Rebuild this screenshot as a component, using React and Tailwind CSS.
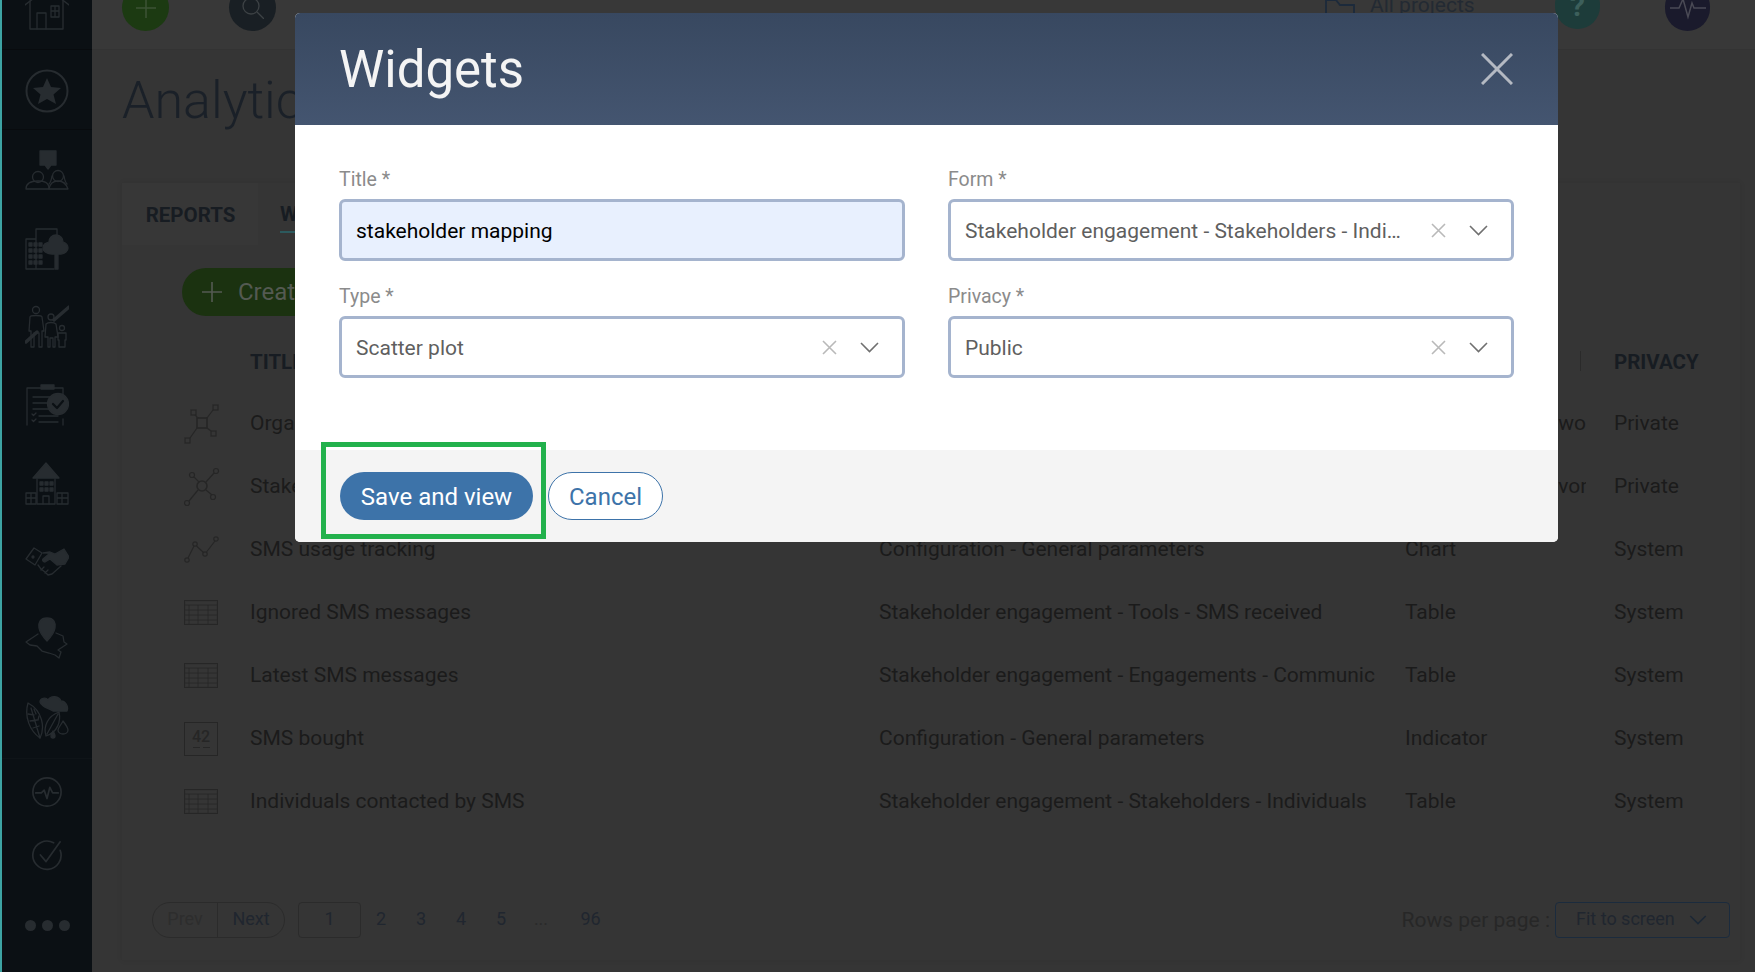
import React from "react";

const S = "#272c30";

function Ic({ children, w = 44, h = 44, vb = "0 0 44 44", color = S, sw = 1.3 }) {
  return (
    <svg width={w} height={h} viewBox={vb} fill="none" stroke={color} strokeWidth={sw} strokeLinecap="round" strokeLinejoin="round">
      {children}
    </svg>
  );
}

const sideIcons = [
  <Ic key="people">
    <path d="M15 2h16v14h-5l-3 4-3-4h-5z" fill={S} />
    <circle cx="13" cy="28" r="5.5" />
    <path d="M1 40c0-7 6-8 12-8s11 1 11 8z" />
    <circle cx="33" cy="27" r="5.5" />
    <path d="M27 27c-1 6-3 8-3 8M39 27c1 6 3 8 3 8" />
    <path d="M24 40c1-6 5-8 9-8s8 2 10 8z" />
  </Ic>,
  <Ic key="city">
    <path d="M1 42V12h10V2h21v12M11 12v30M1 42h28" />
    <path fill={S} d="M4 16h3v3H4zM9 16h3v3H9zM14 16h3v3h-3zM4 22h3v3H4zM9 22h3v3H9zM14 22h3v3h-3zM4 28h3v3H4zM9 28h3v3H9zM14 28h3v3h-3zM4 34h3v3H4zM9 34h3v3H9zM14 34h3v3h-3z" />
    <path fill={S} d="M31 8c5 0 7 4 7 7 3 1 5 3 5 6s-3 6-7 6h-3v15h-3V27h-3c-4 0-9-2-9-6s3-5 6-6c0-4 3-7 7-7z" />
  </Ic>,
  <Ic key="family">
    <circle cx="11" cy="5" r="3.500" />
    <path d="M5 12c0-2 12-2 12 0l2 14h-2v16h-3V28h-5v14H6V26H4z" />
    <circle cx="26" cy="12" r="3" />
    <path d="M21 19c2-2 8-2 10 0l2 13h-3v10h-2v-9h-3v9h-2v-10h-3z" />
    <circle cx="37" cy="23" r="2.500" />
    <path d="M33 28h8v7h-1v7h-6v-7h-1z" />
    <path d="M1 37 12 27M29 15 44 2" strokeWidth="3.400" />
  </Ic>,
  <Ic key="clip">
    <path d="M2 42V5h36v8M38 36v6" />
    <path d="M16 2h13v4H16z" fill={S} />
    <path d="M8 14h23M8 20h19M8 26h16M14 33h19M14 39h19" />
    <path d="M7 31l1.500 1.500L11 30M7 37l1.500 1.500L11 36" />
    <circle cx="33" cy="21" r="10.500" fill={S} />
    <path d="M28 21l4 4 6-7" stroke="#0b1014" strokeWidth="2.200" />
  </Ic>,
  <Ic key="house">
    <path d="M8 17 21 2l13 15z" fill={S} />
    <path d="M12 18v25h18V18" />
    <path fill={S} d="M15 21h3v3h-3zM20 21h3v3h-3zM25 21h3v3h-3zM15 27h3v3h-3zM20 27h3v3h-3zM25 27h3v3h-3z" />
    <path d="M1 32h10v11H1zM32 32h11v11H32zM1 37h10M6 32v11M32 37h11M37 32v11M18 43v-8h6v8" />
  </Ic>,
  <Ic key="hand">
    <path d="M9 9 1 20l9 6 7-12z" />
    <circle cx="8" cy="18" r="1" fill={S} />
    <path d="M18 14l7-1 5 2 9-5 5 8-4 7-8 1-7-6-5 3c-2 0-3-2-2-3l6-5" fill={S} />
    <path d="M13 26l3 4 4 3 3 3 4-1 9-8M16 31l3-3M20 34l3-3" />
  </Ic>,
  <Ic key="pin">
    <path d="M22 1c7 0 9 5 8 10-1 6-8 13-8 13s-7-7-8-13c-1-5 1-10 8-10z" fill={S} />
    <path d="M13 17 1 25l4 3 7 1 5 5 7 2 6 2 4 3 2-6-3-2 9-6-3-2-1-6-7-3" />
  </Ic>,
  <Ic key="leaf">
    <path d="M3 8C-1 22 5 36 15 43c5-10 3-27-12-35z" />
    <path d="M6 13l9 30M3 19l6 1M5 26l7-1M8 33l6-2M9 14l2 5M14 21l-1 4" />
    <path d="M15 7c0-4 6-5 8-2 3-5 11-4 13 1 4 0 8 5 6 10H28c-4-3-11-3-13-9z" fill={S} />
    <path d="M21 41c-3-10 2-20 13-24 2 9-1 20-13 24zM22 39l11-20" />
    <path d="M38 26c3 4 5 7 5 9s-2 4-5 4-5-2-5-4 3-5 5-9z" />
    <path d="M28 36c1 2 2 3 2 5s-1 2-2 2-2-1-2-2 1-3 2-5z" fill={S} />
  </Ic>,
];

function Sidebar() {
  return (
    <aside className="w-[92px] h-full shrink-0 flex flex-col border-l-2 border-[#3da3a3] bg-[#0b1014]">
      <div className="h-[50px] shrink-0 overflow-hidden flex items-end justify-center pb-[19px] border-b border-[#080b0e]">
        <div className="shrink-0">
          <Ic>
            <path d="M0 19 22 2l22 17" strokeWidth="1.400" />
            <path d="M5 15v28h33V15" strokeWidth="1.400" />
            <path d="M12 43V27h9v16M26 20h8v11h-8zM30 20v11M26 25h8" />
          </Ic>
        </div>
      </div>
      <div className="h-[80px] shrink-0 pt-[2px] flex items-center justify-center border-b border-[#080b0e]">
        <svg width="44" height="44" viewBox="0 0 44 44" fill="none">
          <circle cx="22" cy="22" r="20.500" stroke={S} strokeWidth="2" />
          <path d="M22 9l4 9 10 1-7.500 6.500L31 35l-9-5-9 5 2.500-9.500L8 19l10-1z" fill={S} />
        </svg>
      </div>
      <div className="pt-[2px] pb-[2px] shrink-0 border-b border-[#0f1418]">
        {sideIcons.map((icon, i) => (
          <div key={i} className="h-[78px] flex items-center justify-center">{icon}</div>
        ))}
      </div>
      <div className="h-[63px] shrink-0 mt-[1px] flex items-center justify-center">
        <svg width="32" height="32" viewBox="0 0 34 34" fill="none" stroke={S} strokeWidth="1.800" strokeLinecap="round" strokeLinejoin="round">
          <circle cx="17" cy="17" r="15" />
          <path d="M5 18h6l3-3 3 9 3-12 3 6h6" />
        </svg>
      </div>
      <div className="h-[63px] shrink-0 flex items-center justify-center">
        <svg width="32" height="32" viewBox="0 0 34 34" fill="none" stroke={S} strokeWidth="1.800" strokeLinecap="round" strokeLinejoin="round">
          <path d="M31 12A15 15 0 1 1 24 4" />
          <path d="M10 17l6 7L31 3" />
        </svg>
      </div>
      <div className="flex-1 flex items-start justify-center gap-[6px] pt-[34px]">
        <span className="w-[11px] h-[11px] rounded-full bg-[#272c30]" />
        <span className="w-[11px] h-[11px] rounded-full bg-[#272c30]" />
        <span className="w-[11px] h-[11px] rounded-full bg-[#272c30]" />
      </div>
    </aside>
  );
}

function TopBar() {
  return (
    <div className="h-[50px] shrink-0 overflow-hidden flex items-end pb-[18px] pl-[30px] pr-[45px] bg-[#383838] border-b border-[#333333]">
      <div className="w-[47px] h-[47px] shrink-0 rounded-full bg-[#1c3a12] flex items-center justify-center">
        <svg width="20" height="20" viewBox="0 0 20 20" stroke="#3c5336" strokeWidth="1.500"><path d="M10 0v20M0 10h20" /></svg>
      </div>
      <div className="w-[47px] h-[47px] shrink-0 ml-[60px] rounded-full bg-[#191f24] flex items-center justify-center">
        <svg width="22" height="22" viewBox="0 0 22 22" fill="none" stroke="#3d4245" strokeWidth="1.300"><circle cx="9" cy="9" r="8" /><path d="M15 15l7 7" /></svg>
      </div>
      <div className="flex-1" />
      <svg className="shrink-0 mb-[8px]" width="30" height="24" viewBox="0 0 30 24" fill="none" stroke="#1c2a3b" strokeWidth="1.800"><path d="M1 23V1h10l4 5h14v17z" /></svg>
      <span className="ml-[15px] w-[185px] shrink-0 mb-[13px] text-[21px] leading-[26px] text-[#232a33]">All projects</span>
      <div className="w-[45px] h-[47px] shrink-0 mb-[2px] rounded-full bg-[#1d3c3a] flex items-center justify-center text-[30px] font-bold text-[#3c5f5b]">?</div>
      <div className="w-[45px] h-[47px] shrink-0 ml-[65px] rounded-full bg-[#1a1a2c] flex items-center justify-center">
        <svg width="36" height="24" viewBox="0 0 36 24" fill="none" stroke="#4a4a55" strokeWidth="1.500"><path d="M0 12h9l4-9 5 18 4-14 2 5h12" /></svg>
      </div>
    </div>
  );
}

function ScatterSquare() {
  return (
    <svg width="36" height="40" viewBox="0 0 36 40" fill="none" stroke="#262626" strokeWidth="1.200">
      <rect x="13" y="14" width="10" height="10" strokeWidth="1.600" />
      <rect x="7" y="6" width="5" height="5" />
      <rect x="29" y="1" width="5" height="5" />
      <rect x="27" y="27" width="5" height="5" />
      <rect x="1" y="34" width="5" height="5" />
      <path d="M11 11l3 3M29 6l-6 8M23 24l4 3M13 24 6 34" />
    </svg>
  );
}
function ScatterRound() {
  return (
    <svg width="36" height="40" viewBox="0 0 36 40" fill="none" stroke="#262626" strokeWidth="1.200">
      <circle cx="18" cy="19" r="5" strokeWidth="1.600" />
      <circle cx="8" cy="8" r="2.500" />
      <circle cx="32" cy="4" r="2.500" />
      <circle cx="29" cy="30" r="2.500" />
      <circle cx="3" cy="36" r="2.500" />
      <path d="M10 10l5 5M30 6 22 15M22 23l6 5M14 23 5 34" />
    </svg>
  );
}
function LineIcon() {
  return (
    <svg width="36" height="28" viewBox="0 0 36 28" fill="none" stroke="#262626" strokeWidth="1.200">
      <circle cx="3" cy="24" r="2.200" /><circle cx="11" cy="8" r="2.200" /><circle cx="21" cy="18" r="2.200" /><circle cx="32" cy="3" r="2.200" />
      <path d="M4 22 10 10M12.500 10l7 6.500M22.500 16 31 5" />
    </svg>
  );
}
function TableIcon() {
  return (
    <svg width="34" height="25" viewBox="0 0 34 25" fill="none" stroke="#262626">
      <rect x="0.500" y="0.500" width="33" height="24" strokeWidth="1.200" />
      <path d="M1 5h32M1 10h32M1 15h32M1 20h32M5 5v19M14 5v19M24 5v19" strokeWidth="0.800" />
    </svg>
  );
}
function FortyTwo() {
  return (
    <div className="w-[34px] h-[34px] border border-[#262626] flex flex-col items-center justify-center">
      <span className="text-[16px] leading-[16px] font-medium text-[#262626]">42</span>
      <span className="flex gap-[3px] mt-[2px]">
        <i className="block w-[7px] h-px bg-[#262626]" />
        <i className="block w-[7px] h-px bg-[#262626]" />
      </span>
    </div>
  );
}

const rows = [
  [<ScatterSquare />, "Organisation network", "Stakeholder engagement - Stakeholders - Organisations", "Network graph - wo", "Private"],
  [<ScatterRound />, "Stakeholder network", "Stakeholder engagement - Stakeholders - Individuals", "Network graph - vor", "Private"],
  [<LineIcon />, "SMS usage tracking", "Configuration - General parameters", "Chart", "System"],
  [<TableIcon />, "Ignored SMS messages", "Stakeholder engagement - Tools - SMS received", "Table", "System"],
  [<TableIcon />, "Latest SMS messages", "Stakeholder engagement - Engagements - Communications", "Table", "System"],
  [<FortyTwo />, "SMS bought", "Configuration - General parameters", "Indicator", "System"],
  [<TableIcon />, "Individuals contacted by SMS", "Stakeholder engagement - Stakeholders - Individuals", "Table", "System"],
];

function Chevron({ color = "#707070", w = 19 }) {
  return (
    <svg className="shrink-0" width={w} height={Math.round(w * 0.58)} viewBox="0 0 19 11" fill="none" stroke={color} strokeWidth="1.600">
      <path d="M1 1l8.500 8.500L18 1" />
    </svg>
  );
}

function Page() {
  return (
    <main className="flex-1 min-w-0 h-full flex flex-col">
      <TopBar />
      <div className="flex-1 pl-[30px] pr-[15px]">
        <h1 className="mt-[21px] h-[60px] text-[52px] leading-[60px] font-light text-[#1a2028] whitespace-nowrap">Analytics</h1>
        <section className="mt-[52px] h-[777px] bg-[#353535] shadow-[0_0_6px_rgba(0,0,0,0.08)] flex flex-col">
          <div className="h-[62px] shrink-0 pt-[3px] flex bg-[#353535]">
            <div className="w-[136px] -mt-[3px] pt-[3px] pl-[1px] flex items-center justify-center text-[20.500px] font-bold text-[#171c22] bg-[#373737]">REPORTS</div>
            <div className="ml-[22px] flex items-center">
              <span className="text-[20.500px] font-bold text-[#171c22] h-[34px] border-b-[2px] border-[#2c5a5e]">WIDGETS</span>
            </div>
          </div>
          <div className="pl-[60px] pt-[23px] shrink-0">
            <button className="h-[48px] px-[20px] rounded-full bg-[#1b3210] text-[#545a52] text-[24px] flex items-center gap-[16px]">
              <svg width="20" height="20" viewBox="0 0 20 20" stroke="#545a52" strokeWidth="1.600"><path d="M10 0v20M0 10h20" /></svg>
              Create
            </button>
          </div>
          <div className="h-[62px] pt-[2px] shrink-0 grid grid-cols-[128px_629px_526px_209px_1fr] items-center text-[20.500px] font-bold text-[#171c22] mt-[14px]">
            <span />
            <span>TITLE</span>
            <span>FORM</span>
            <span className="relative">TYPE<i className="absolute right-[33px] top-[4px] w-px h-[20px] bg-[#2a2a2a]" /></span>
            <span>PRIVACY</span>
          </div>
          {rows.map((r, i) => (
            <div key={i} className="h-[63px] shrink-0 grid grid-cols-[128px_629px_526px_209px_1fr] items-center text-[21px] text-[#1b1b1b]">
              <span className="pl-[62px] flex items-center">{r[0]}</span>
              <span className="truncate">{r[1]}</span>
              <span className="whitespace-nowrap overflow-hidden mr-[30px]">{r[2]}</span>
              <span className="whitespace-nowrap overflow-hidden mr-[28px]">{r[3]}</span>
              <span>{r[4]}</span>
            </div>
          ))}
          <div className="mt-[69px] h-[36px] pl-[30px] pr-[10px] flex items-center shrink-0">
            <div className="h-[36px] w-[133px] flex rounded-full border border-[#2b2b2b] text-[18px] leading-[31px]">
              <span className="w-[65px] text-center text-[#2d2d2d] border-r border-[#2b2b2b]">Prev</span>
              <span className="flex-1 text-center text-[#20262f]">Next</span>
            </div>
            <span className="ml-[13px] h-[36px] w-[63px] rounded-[4px] border border-[#2b2b2b] text-center text-[18px] leading-[32px] text-[#20262e]">1</span>
            <div className="flex text-[18px] leading-[31px] h-[34px] text-[#20262f]">
              <span className="w-[40px] text-center">2</span>
              <span className="w-[40px] text-center">3</span>
              <span className="w-[40px] text-center">4</span>
              <span className="w-[40px] text-center">5</span>
              <span className="w-[40px] text-center text-[#2a2a2a]">...</span>
              <span className="w-[59px] text-center">96</span>
            </div>
            <div className="flex-1" />
            <span className="text-[21px] pt-[1px] text-[#272727] mr-[5px]">Rows per page :</span>
            <div className="h-[36px] w-[175px] rounded-[4px] border border-[#1b2b3d] flex items-center pl-[20px] pr-[22px] justify-between text-[18px] text-[#20262f]">
              <span className="pb-[3px]">Fit to screen</span>
              <Chevron color="#1b2735" w={18} />
            </div>
          </div>
        </section>
      </div>
    </main>
  );
}

function ClearIcon() {
  return (
    <svg className="shrink-0 mt-[1px]" width="15" height="15" viewBox="0 0 15 15" stroke="#b9b9b9" strokeWidth="1.600">
      <path d="M1 1l13 13M14 1 1 14" />
    </svg>
  );
}

function Field({ label, value, select, filled }) {
  return (
    <div className="min-w-0">
      <div className="h-[26px] mb-[8px] pt-[2px] text-[19.500px] leading-[26px] text-[#8b8b8b]">{label}</div>
      <div className={`h-[62px] rounded-[6px] border-[3px] border-[#a5b4ce] pl-[14px] pr-[23px] flex items-center ${filled ? "bg-[#e8f0fe] text-black" : "bg-white text-[#5f5f5f]"}`}>
        <span className="flex-1 min-w-0 truncate pt-[3px] text-[21px]">{value}</span>
        {select && <span className="ml-[28px] mr-[23px] flex"><ClearIcon /></span>}
        {select && <Chevron />}
      </div>
    </div>
  );
}

function Modal() {
  return (
    <div className="absolute left-[295px] top-[13px] w-[1263px] h-[529px] rounded-[5px] overflow-hidden bg-white flex flex-col">
      <header className="h-[112px] shrink-0 pl-[44px] pr-[45px] flex items-center justify-between bg-gradient-to-b from-[#384860] to-[#445570]">
        <h2 className="text-[51px] leading-[58px] pt-[2px] text-[#f4f4f4]">Widgets</h2>
        <svg width="32" height="32" viewBox="0 0 32 32" stroke="#b4b9c2" strokeWidth="3"><path d="M1 1l30 30M31 1 1 31" /></svg>
      </header>
      <div className="flex-1 px-[44px] pt-[40px]">
        <div className="grid grid-cols-2 gap-x-[43px] gap-y-[21px]">
          <Field label="Title *" value="stakeholder mapping" filled />
          <Field label="Form *" value="Stakeholder engagement - Stakeholders - Individuals" select />
          <Field label="Type *" value="Scatter plot" select />
          <Field label="Privacy *" value="Public" select />
        </div>
      </div>
      <footer className="h-[92px] shrink-0 bg-[#f4f4f4] pl-[45px] pt-[22px] flex items-start gap-[15px]">
        <button className="h-[48px] w-[193px] pt-[1px] rounded-full bg-[#3d73a9] text-white text-[24px]">Save and view</button>
        <button className="h-[48px] w-[115px] pt-[1px] rounded-full bg-white border border-[#3d73a9] text-[#3d73a9] text-[24px]">Cancel</button>
      </footer>
    </div>
  );
}

export default function App() {
  return (
    <div className="relative w-[1755px] h-[972px] overflow-hidden flex bg-[#353535] font-['Roboto',sans-serif]">
      <Sidebar />
      <Page />
      <Modal />
      <div className="absolute left-[321px] top-[442px] w-[225px] h-[97px] border-[5px] border-[#22b14c]" />
    </div>
  );
}
